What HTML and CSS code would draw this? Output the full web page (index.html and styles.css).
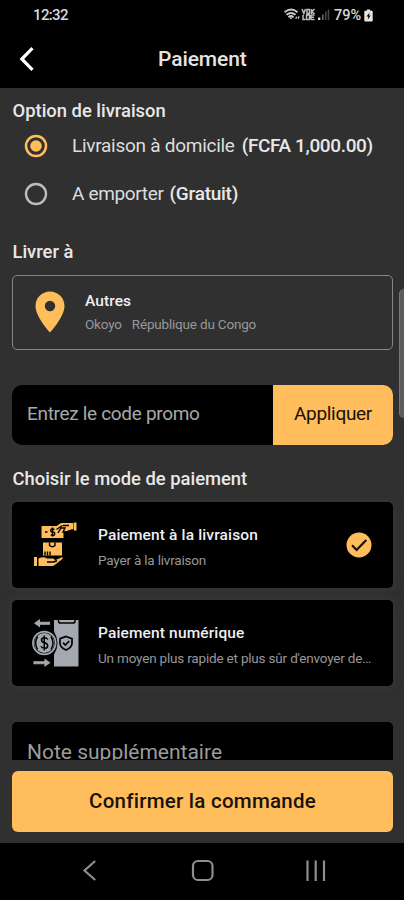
FILE: index.html
```
<!DOCTYPE html>
<html lang="fr">
<head>
<meta charset="utf-8">
<title>Paiement</title>
<link rel="stylesheet" href="styles.css">
</head>
<body>
<div class="screen">
  <div class="status">
    <span class="clock">12:32</span>
    <svg class="signals" width="46" height="14" viewBox="0 0 46 14">
      <g fill="none" stroke="#c9c9c9" stroke-width="1.900">
        <path d="M.500 4.200Q7-1 13.500 4.200M2.500 6.800Q7 3 11.500 6.800M4.500 9.200Q7 7 9.500 9.200"/>
      </g>
      <path d="M5.500 9.500h3L7 11.500zM11 10.500l1.300-2.200 1.300 2.200zM13.700 8.500h2l-1 3z" fill="#ddd"/>
      <g fill="none" stroke="#bdbdbd" stroke-width="1.500">
        <path d="M18 1l1.800 4.500L21.500 1M23 5.500V1.500h2.500v4zM27.500 1v5M30.500 1l-2.500 2.500 2.500 2.500M19 7v4.500h2.500M22.500 7h3v4.500h-3zM27 7v4.500M27 7h3.500M27 9.200h3M27 11.500h3.500"/>
      </g>
      <path d="M34 9.500h2.300V12H34z" fill="#e0e0e0"/>
      <path d="M38 6.500h1.700V12H38z" fill="#666"/>
      <path d="M41 3.500h1.500V12H41zM43.700 1.500h1.500V12h-1.500z" fill="#484848"/>
    </svg>
    <span class="percent">79%</span>
    <svg class="battery" width="9" height="13" viewBox="0 0 9 13"><path d="M2.800.5h3.400v1.300H8q.7 0 .7.700v9q0 1-1 1H1.300q-1 0-1-1v-9q0-.7.700-.7h1.800z" fill="#e5e5e5"/><path d="M5.600 3.500L2.500 7.600h1.800L3.700 10.700 6.700 6.500H5z" fill="#000"/></svg>
  </div>
  <header class="appbar">
    <svg class="back" width="16" height="26" viewBox="0 0 16 26"><path d="M13.500 2.200L2.800 13l10.700 10.800" fill="none" stroke="#fff" stroke-width="3.200"/></svg>
    <h1>Paiement</h1>
  </header>
  <main class="content">
    <h2 class="heading delivery-heading"><span class="t-option">Option de livraison</span></h2>
    <div class="option">
      <svg width="24" height="24" viewBox="0 0 24 24"><circle cx="12" cy="12" r="10" fill="none" stroke="#ffbd5c" stroke-width="2.500"/><circle cx="12" cy="12" r="5.800" fill="#ffbd5c"/></svg>
      <span class="t-home">Livraison à domicile</span><b class="t-fee">(FCFA 1,000.00)</b>
    </div>
    <div class="option second">
      <svg width="24" height="24" viewBox="0 0 24 24"><circle cx="12" cy="12" r="10" fill="none" stroke="#bdbdbd" stroke-width="2.400"/></svg>
      <span class="t-take">A emporter</span><b class="t-free">(Gratuit)</b>
    </div>
    <h2 class="heading address-heading"><span class="t-deliver">Livrer à</span></h2>
    <section class="address">
      <svg width="30" height="42" viewBox="0 0 30 42"><path fill="#ffbd5c" fill-rule="evenodd" d="M15 .5C6.800.5.500 6.900.500 15 .5 26 15 41.500 15 41.500S29.500 26 29.500 15C29.500 6.900 23.200.5 15 .5zM15 9.800a5.200 5.200 0 1 1 0 10.400 5.200 5.200 0 0 1 0-10.400z"/></svg>
      <div class="lines">
        <b class="t-others">Autres</b>
        <span class="place"><span class="t-city">Okoyo</span><span class="t-country">République du Congo</span></span>
      </div>
    </section>
    <section class="promo">
      <div class="code"><span class="t-code">Entrez le code promo</span></div>
      <div class="apply"><span class="t-apply">Appliquer</span></div>
    </section>
    <h2 class="heading method-heading"><span class="t-choose">Choisir le mode de paiement</span></h2>
    <section class="method">
      <svg class="art" width="48" height="48" viewBox="0 0 48 48">
        <g fill="#ffbd5c">
          <path d="M9.500 5h22v12h-22z"/>
          <path d="M24 5.500l5-3.500h12.500v6l-8 2.500-7-1z"/>
          <path d="M42 1.500h2.500v8H42z"/>
          <path d="M11 21.500h19v13H11z"/>
          <path d="M2 36h3v9H2zM6.500 37.500q5-2.500 8.500 0h5.500q2.500 0 2 2l8-3.500q1 1-1 2.800L22 44.500q-1 .5-3 .5H6.500z"/>
        </g>
        <g fill="none" stroke="#000" stroke-width="1.400">
          <path d="M22.500 8.500q-3.500-1.500-3.800.5t2 2 2 2.200-4 .7M20.500 6.500v9M13 11h2.500M26 12l3-5h4l-2 4h4l5-2M24.500 8.500l6-4M31 4.500h6"/>
          <path d="M17.500 21.500v3q3 2.500 5.500 0v-3M13 30.500v4M15.500 30.500v4M18 30.500v4M15 41h7l3-1.500"/>
        </g>
      </svg>
      <div class="lines"><b class="t-cash">Paiement à la livraison</b><span class="t-cashsub">Payer à la livraison</span></div>
      <svg class="check" width="26" height="26" viewBox="0 0 26 26"><circle cx="13" cy="13" r="12.500" fill="#ffbd5c"/><path d="M6 13.200l4.600 4.700 9.700-10" fill="none" stroke="#17120a" stroke-width="2.200"/></svg>
    </section>
    <section class="method">
      <svg class="art" width="48" height="48" viewBox="0 0 48 48">
        <path d="M22 1h24.500v46.500H22z" fill="#a4a9af"/>
        <path d="M26.500 1v1.200q0 1.800 2 1.800h12.500q2 0 2-1.800V1" fill="none" stroke="#000" stroke-width="1.500"/>
        <path d="M3 4.200L7.500 1v2.200h10v2h-10v2.200zM17.500 43.700L13 40.500v2.200H2v2h11v2.200z" fill="#a4a9af" stroke="#a4a9af" stroke-width="1.100"/>
        <path d="M22 12.500q7 11.500 0 23z" fill="#000"/>
        <circle cx="12.300" cy="24" r="11.400" fill="none" stroke="#a4a9af" stroke-width="1.700"/>
        <circle cx="12.300" cy="24" r="10" fill="#a4a9af"/>
        <path d="M5.600 17.500q-4 6.500 0 13M19 17.500q4 6.500 0 13M15.800 20.500q-1-1.800-3.300-1.800-3 0-3 2.400 0 2.100 3 2.700t3.200 2.900q0 2.600-3.200 2.600-2.500 0-3.400-2M12.300 16.500v15" fill="none" stroke="#000" stroke-width="1.500"/>
        <path d="M34 17.500l6 2.200v4.500q0 4-6 6.800-6-2.800-6-6.800v-4.500zM31 23.700l2.300 2.300 4-4" fill="none" stroke="#000" stroke-width="1.700"/>
      </svg>
      <div class="lines"><b class="t-digital">Paiement numérique</b><span class="t-digitalsub">Un moyen plus rapide et plus sûr d'envoyer de…</span></div>
    </section>
    <section class="note"><span class="t-note">Note supplémentaire</span></section>
    <div class="confirm"><span class="t-confirm">Confirmer la commande</span></div>
    <div class="edge"></div>
  </main>
  <nav class="nav">
    <svg width="404" height="57" viewBox="0 0 404 57"><g fill="none" stroke="#8e8e8e" stroke-width="2.200"><path d="M95.200 18L84.500 27.500l10.700 9.500"/><rect x="193" y="18" width="19.500" height="19" rx="5"/><path d="M307.500 17.500v20.500M315.700 17.500v20.500M324 17.500v20.500"/></g></svg>
  </nav>
</div>
</body>
</html>
```
FILE: styles.css
```
* { box-sizing: border-box; }
body { margin: 0; background: #000; font-family: Roboto, sans-serif; color: #e8e8e8; }
h1, h2 { margin: 0; font-weight: 500; }
b { font-weight: 500; }
span, b { white-space: nowrap; }
svg { display: block; flex: none; }
.screen { width: 404px; height: 900px; overflow: hidden; display: flex; flex-direction: column; }
.status { height: 30px; display: flex; align-items: center; padding-left: 33px; }
.clock { width: 251px; font-size: 15px; font-weight: 500; letter-spacing: -.65px; color: #d8d8d8; }
.signals { width: 46px; margin-right: 4px; }
.percent { width: 29px; font-size: 14.500px; font-weight: 500; color: #d8d8d8; }
.battery { margin-left: 1px; }
.appbar { height: 58px; display: flex; align-items: center; padding-left: 19px; }
h1 { margin-left: 123px; font-size: 21px; letter-spacing: -.1px; color: #e4e4e4; }
.content { position: relative; height: 755px; background: #303030; padding: 0 11px 0 12px; }
.heading { height: 24px; line-height: 24px; font-size: 18.400px; padding-left: .5px; }
.delivery-heading { padding-top: 11px; height: 34px; }
.option { height: 46px; display: flex; align-items: center; padding-left: 12px; font-size: 19px; color: #ddd; letter-spacing: -.27px; }
.option svg { margin-right: 24px; margin-top: 2px; }
.option b { margin-left: 7px; color: #e8e8e8; letter-spacing: -.36px; }
.option.second { margin-top: 2px; }
.option .t-take { letter-spacing: -.35px; }
.option .t-free { margin-left: 6px; letter-spacing: -.25px; }
.address-heading { margin-top: 24px; }
.address { height: 75px; margin-top: 11px; border: 1.500px solid #858786; border-radius: 5px; display: flex; align-items: center; padding-left: 21.500px; }
.address svg { margin-top: -2px; }
.address .lines { margin-left: 20.500px; }
.lines { display: flex; flex-direction: column; }
.lines b { color: #efefef; font-size: 15.500px; line-height: 20px; letter-spacing: .1px; }
.lines span { color: #96989a; font-size: 13.500px; line-height: 20px; letter-spacing: -.19px; }
.address .lines { gap: 3px; }
.place { display: flex; gap: 10px; }
.promo { display: flex; height: 60px; margin-top: 35px; border-radius: 10px; overflow: hidden; font-size: 19px; letter-spacing: -.32px; }
.code { width: 261px; background: #000; color: #a8a8a8; display: flex; align-items: center; padding: 0 0 3px 15px; }
.apply { flex: 1; background: #ffbd5c; color: #17120a; display: flex; align-items: center; justify-content: center; padding-bottom: 3px; }
.method-heading { margin-top: 22px; margin-bottom: 11px; }
.method { height: 86px; margin-bottom: 12px; background: #000; border-radius: 5px; box-shadow: 0 0 8px #3b3b3b; display: flex; align-items: center; padding-left: 20px; }
.method .lines { width: 274px; margin-left: 18px; padding-top: 4px; gap: 5px; }
.method .lines b { letter-spacing: .14px; }
.check { margin-left: -26px; }
.note { height: 38px; margin-top: 36px; background: #000; border-radius: 5px 5px 0 0; overflow: hidden; padding: 17px 0 0 15px; font-size: 21px; line-height: 26px; color: #9c9c9c; }
.confirm { height: 61px; margin-top: 11px; background: #ffbd5c; border-radius: 6px; color: #17120a; display: flex; align-items: center; justify-content: center; font-size: 20.500px; letter-spacing: .25px; font-weight: 500; padding-bottom: 2px; }
.edge { position: absolute; right: 0; top: 201px; width: 5px; height: 129px; background: #5c5c5c; border-left: 1px solid #777; border-radius: 6px 0 0 6px; }
.nav { height: 57px; background: #000; }
```
